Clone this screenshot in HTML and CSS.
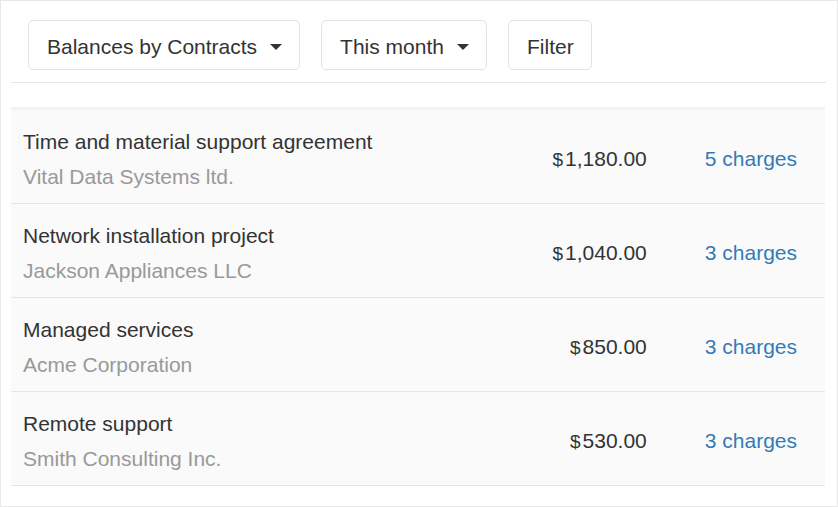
FILE: index.html
```html
<!DOCTYPE html>
<html lang="en">
<head>
    <meta charset="UTF-8">
    <meta name="viewport" content="width=device-width, initial-scale=1.0">
    <title>Balances by Contracts</title>
    <link rel="stylesheet" href="styles.css">
</head>
<body>

<div class="panel">
    <div class="toolbar">
        <button class="btn">Balances by Contracts <span class="caret"></span></button>
        <button class="btn">This month <span class="caret"></span></button>
        <button class="btn">Filter</button>
    </div>

    <ul class="contracts">
        <li class="row">
            <div class="info">
                <div class="title">Time and material support agreement</div>
                <div class="client">Vital Data Systems ltd.</div>
            </div>
            <div class="amount"><span class="cur">$</span>1,180.00</div>
            <a class="charges" href="#">5 charges</a>
        </li>
        <li class="row">
            <div class="info">
                <div class="title">Network installation project</div>
                <div class="client">Jackson Appliances LLC</div>
            </div>
            <div class="amount"><span class="cur">$</span>1,040.00</div>
            <a class="charges" href="#">3 charges</a>
        </li>
        <li class="row">
            <div class="info">
                <div class="title">Managed services</div>
                <div class="client">Acme Corporation</div>
            </div>
            <div class="amount"><span class="cur">$</span>850.00</div>
            <a class="charges" href="#">3 charges</a>
        </li>
        <li class="row">
            <div class="info">
                <div class="title">Remote support</div>
                <div class="client">Smith Consulting Inc.</div>
            </div>
            <div class="amount"><span class="cur">$</span>530.00</div>
            <a class="charges" href="#">3 charges</a>
        </li>
    </ul>
</div>

</body>
</html>
```

FILE: styles.css
```css
html, body { margin: 0; padding: 0; }
body { font-family: 'Liberation Sans', Arial, sans-serif; color: #333; background: #fff; }

.panel { width: 838px; height: 507px; box-sizing: border-box; border: 1px solid #e8e8e8; padding: 0 11px 0 10px; }

/* Toolbar */
.toolbar { display: flex; gap: 21px; padding: 19px 17px 12px; border-bottom: 1px solid #e6e6e6; }
.btn { display: flex; align-items: center; height: 50px; padding: 3px 17px 0 18px; border: 1px solid #e3e3e3; border-radius: 5px; background: #fff; font-family: inherit; font-size: 21px; color: #333; cursor: pointer; }
.caret { display: inline-block; width: 0; height: 0; margin-left: 13px; border-left: 6px solid transparent; border-right: 6px solid transparent; border-top: 6px solid #333; }

/* Contract list */
.contracts { list-style: none; margin: 24px 1px 0 0; padding: 0; background: #fafafa; border-top: 3px solid #f2f2f2; }
.row { display: flex; align-items: center; height: 93px; border-bottom: 1px solid #e6e6e6; padding: 0 28px 0 12px; }
.info { flex: 1; margin-top: 6px; }
.title { font-size: 21px; line-height: 24px; }
.client { font-size: 21px; line-height: 24px; margin-top: 11px; color: #999; }
.amount { font-size: 21px; margin-top: 4px; text-align: right; }
.cur { font-size: 19px; margin-right: 2px; }
.charges { font-size: 21px; margin-top: 4px; margin-left: 58px; color: #337ab7; text-decoration: none; }
```
